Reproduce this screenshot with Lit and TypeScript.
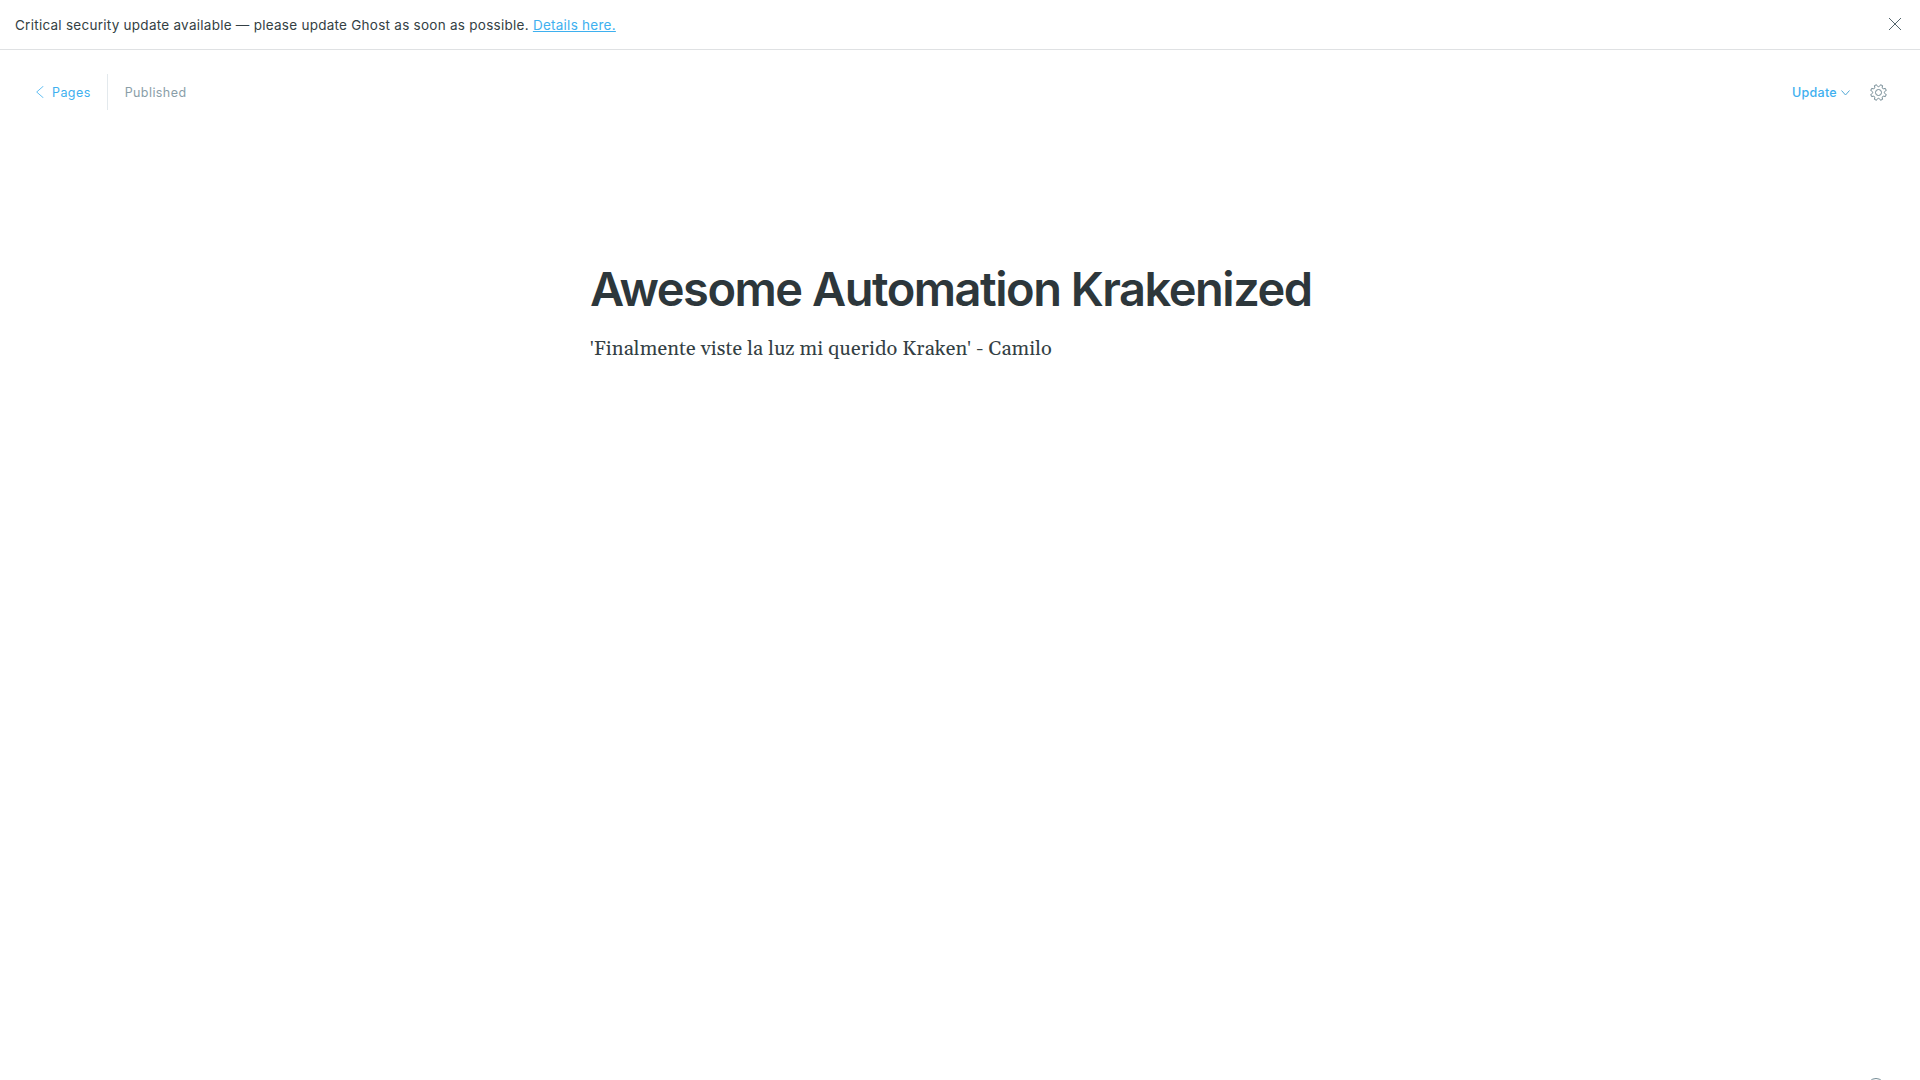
import { LitElement, html, css } from "lit";
import { customElement } from "lit/decorators.js";

/** Outline of an eight-toothed gear centred at (8.5, 8.5), with rounded valleys. */
function gearOutline(): string {
  const at = (deg: number, r: number) => {
    const a = (deg * Math.PI) / 180;
    return `${(8.5 + r * Math.cos(a)).toFixed(2)} ${(8.5 + r * Math.sin(a)).toFixed(2)}`;
  };
  let d = "";
  for (let k = 0; k < 8; k++) {
    const tooth = 22.5 + 45 * k;
    d += `${k ? "L" : "M"}${at(tooth - 8, 8)}L${at(tooth + 8, 8)}`;
    d += `C${at(tooth + 13, 5.2)} ${at(tooth + 32, 5.2)} ${at(tooth + 37, 8)}`;
  }
  return d + "Z";
}

@customElement("app-root")
export class AppRoot extends LitElement {
  static styles = css`
    :host {
      display: flex;
      flex-direction: column;
      height: 1080px;
      overflow: hidden;
      position: relative;
      background: #fff;
      color: #394047;
      font-family: Inter, "Liberation Sans", sans-serif;
    }
    * { box-sizing: border-box; }
    svg { display: block; fill: none; flex: none; }
    a { color: #3eb0ef; }
    .alert {
      display: flex;
      align-items: center;
      justify-content: space-between;
      height: 50px;
      padding: 0 19px 1px 15px;
      border-bottom: 1px solid #dfe1e3;
      font-size: 13.5px;
      letter-spacing: 0.26px;
      color: #343f44;
      white-space: pre;
    }
    .message { padding-top: 2px; }
    .close { stroke: #54666d; }
    .toolbar {
      display: flex;
      align-items: center;
      justify-content: space-between;
      height: 84px;
      padding: 0 33px 0 36px;
      font-size: 12.5px;
      letter-spacing: 0.42px;
    }
    .group { display: flex; align-items: center; }
    .back { display: flex; align-items: center; gap: 8px; text-decoration: none; }
    .back svg { stroke: #3eb0ef; }
    .divider { width: 1px; height: 36px; margin: 0 17px 0 16px; background: #e3e9ed; }
    .status { color: #8a9ea8; }
    .update { display: flex; align-items: center; gap: 4px; color: #3eb0ef; font-weight: 500; letter-spacing: 0.3px; }
    .update svg { stroke: #54a9d6; margin-top: 2px; }
    .gear { stroke: #738a94; margin-left: 20px; }
    main { width: 740px; margin: 123px auto 0; }
    h1 {
      margin: 0;
      font-size: 47px;
      line-height: 63px;
      font-weight: 600;
      letter-spacing: -1.49px;
      color: #2d373b;
      white-space: nowrap;
    }
    p {
      margin: 13px 0 0;
      font-family: Georgia, Gelasio, "Liberation Serif", serif;
      font-size: 20px;
      line-height: 32px;
      letter-spacing: 0.1px;
      color: #343f44;
      white-space: nowrap;
    }
    .quote { font-family: "Liberation Serif", serif; line-height: 1; }
    .help { position: absolute; left: 1867px; top: 1078px; stroke: #738a94; }
  `;

  render() {
    return html`
      <div class="alert">
        <span class="message">Critical security update available — please update Ghost as soon as possible. <a href="#">Details here.</a></span>
        <svg class="close" width="12" height="12" viewBox="0 0 12 12"><path d="M0 0l12 12M12 0l-12 12" /></svg>
      </div>
      <header class="toolbar">
        <div class="group">
          <a class="back" href="#">
            <svg width="8" height="12" viewBox="0 0 8 12"><path stroke-width=".8" d="M7.500 0L.7 6l6.800 6" /></svg>
            <span>Pages</span>
          </a>
          <div class="divider"></div>
          <span class="status">Published</span>
        </div>
        <div class="group">
          <div class="update"><span>Update</span>
            <svg width="9" height="6" viewBox="0 0 9 6"><path d="M.5.5l4 4.500 4-4.500" /></svg>
          </div>
          <svg class="gear" width="17" height="17" viewBox="0 0 17 17">
            <path stroke-linejoin="round" d=${gearOutline()} />
            <circle cx="8.5" cy="8.5" r="3" />
          </svg>
        </div>
      </header>
      <main>
        <h1>Awesome Automation Krakenized</h1>
        <p><span class="quote">'</span>Finalmente viste la luz mi querido Kraken<span class="quote">'</span> - Camilo</p>
      </main>
      <svg class="help" width="18" height="18" viewBox="0 0 18 18"><circle cx="9" cy="9" r="8.500" /></svg>
    `;
  }
}
